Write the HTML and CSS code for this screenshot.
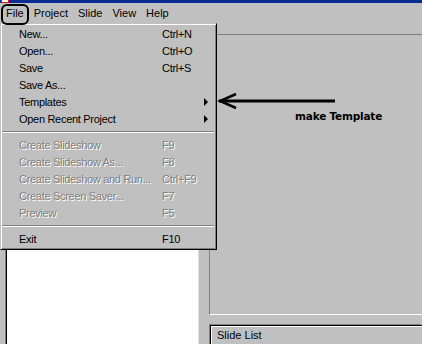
FILE: index.html
```html
<!DOCTYPE html>
<html>
<head>
    <title>Slideshow - File Menu</title>
    <link rel="stylesheet" href="styles.css">
</head>
<body>
    <div class="window">
        <div class="titlebar">
            <span class="app-icon"></span>
        </div>

        <div class="menubar">
            <span class="menu-title first">File</span>
            <span class="menu-title">Project</span>
            <span class="menu-title">Slide</span>
            <span class="menu-title">View</span>
            <span class="menu-title">Help</span>
        </div>

        <div class="workspace">
            <div class="left-pane">
                <div class="listbox"></div>
            </div>
            <div class="right-pane">
                <div class="preview"></div>
                <div class="slide-list">Slide List</div>
            </div>
        </div>

        <!-- menu desplegado -->
        <div class="dropdown">
            <div class="item"><span>New...</span><span>Ctrl+N</span></div>
            <div class="item"><span>Open...</span><span>Ctrl+O</span></div>
            <div class="item"><span>Save</span><span>Ctrl+S</span></div>
            <div class="item"><span>Save As...</span><span></span></div>
            <div class="item"><span>Templates</span><span></span><span class="sub-arrow"></span></div>
            <div class="item"><span>Open Recent Project</span><span></span><span class="sub-arrow"></span></div>
            <div class="separator"></div>
            <div class="item disabled"><span>Create Slideshow</span><span>F9</span></div>
            <div class="item disabled"><span>Create Slideshow As...</span><span>F8</span></div>
            <div class="item disabled"><span>Create Slideshow and Run...</span><span>Ctrl+F9</span></div>
            <div class="item disabled"><span>Create Screen Saver...</span><span>F7</span></div>
            <div class="item disabled"><span>Preview</span><span>F5</span></div>
            <div class="separator"></div>
            <div class="item"><span>Exit</span><span>F10</span></div>
        </div>

        <!-- anotaciones -->
        <div class="file-circle"></div>
        <svg class="note-arrow" width="120" height="18" viewBox="0 0 120 18">
            <path d="M2 9 L118 9" stroke="#000" stroke-width="3" fill="none"/>
            <path d="M19 2 L3 9 L19 16" stroke="#000" stroke-width="2.5" fill="none" stroke-linejoin="miter"/>
        </svg>
        <div class="note-text">make Template</div>
    </div>
</body>
</html>
```

FILE: styles.css
```css
/* Ventana general */
body {
    margin: 0;
    background-color: #c0c0c0;
    font-family: "Liberation Sans", Arial, sans-serif;
    font-size: 11px;
    color: #000;
}

.window {
    position: relative;
    width: 422px;
    height: 344px;
    overflow: hidden;
    background-color: #c0c0c0;
}

.titlebar {
    height: 3px;
    background-color: #0c2a94;
}

.app-icon {
    display: block;
    width: 6px;
    height: 2px;
    margin-left: 1px;
    background-color: #fff;
    border: 1px solid #e01010;
    border-top: none;
}

/* Barra de menu */
.menubar {
    display: flex;
    height: 20px;
    line-height: 21px;
}

.menu-title {
    padding: 0 5px;
}

.menu-title.first {
    margin-left: 1px;
}

/* Zona de trabajo */
.workspace {
    display: flex;
    height: 321px;
}

.left-pane {
    flex-shrink: 0;
    width: 209px;
    padding: 6px 0 0 5px;
    box-sizing: border-box;
}

.listbox {
    width: 194px;
    height: 400px;
    box-sizing: border-box;
    background-color: #fff;
    border-left: 1px solid #808080;
    border-top: 1px solid #808080;
    border-right: 1px solid #dfdfdf;
    box-shadow: inset 1px 1px 0 #000;
}

.right-pane {
    flex: 1;
    min-width: 0;
    padding-top: 11px;
}

.preview {
    height: 281px;
    box-sizing: border-box;
    border-top: 1px solid #808080;
    border-left: 1px solid #808080;
    border-bottom: 1px solid #fff;
}

.slide-list {
    margin: 10px 0 0 1px;
    height: 24px;
    box-sizing: border-box;
    padding-left: 6px;
    line-height: 18px;
    border-top: 1px solid #000;
    border-left: 1px solid #000;
    box-shadow: inset 1px 1px 0 #fff, -1px -1px 0 #808080;
}

/* Menu desplegable */
.dropdown {
    position: absolute;
    left: 0;
    top: 23px;
    width: 217px;
    box-sizing: border-box;
    padding: 1px 0 2px 0;
    background-color: #c0c0c0;
    border: 1px solid;
    border-color: #c0c0c0 #000 #000 #c0c0c0;
    box-shadow: inset 1px 1px 0 #fff, inset -1px -1px 0 #808080;
}

.item {
    display: grid;
    grid-template-columns: 143px 1fr 4px;
    align-items: center;
    height: 17px;
    padding: 0 8px 0 18px;
    letter-spacing: -0.3px;
}

.item.disabled {
    color: #808080;
    text-shadow: 1px 1px 0 #fff;
}

.sub-arrow {
    width: 0;
    height: 0;
    border-top: 4px solid transparent;
    border-bottom: 4px solid transparent;
    border-left: 4px solid #000;
}

.separator {
    margin: 4px 2px 3px 1px;
    border-top: 1px solid #808080;
    border-bottom: 1px solid #fff;
}

/* Anotaciones sobre la captura */
.file-circle {
    position: absolute;
    left: 1px;
    top: 4px;
    width: 28px;
    height: 21px;
    box-sizing: border-box;
    border: 2px solid #000;
    border-radius: 6px;
}

.note-arrow {
    position: absolute;
    left: 217px;
    top: 92px;
}

.note-text {
    position: absolute;
    left: 295px;
    top: 110px;
    font-family: "DejaVu Sans", Verdana, sans-serif;
    font-weight: bold;
    font-size: 10.5px;
    letter-spacing: -0.2px;
}
```
